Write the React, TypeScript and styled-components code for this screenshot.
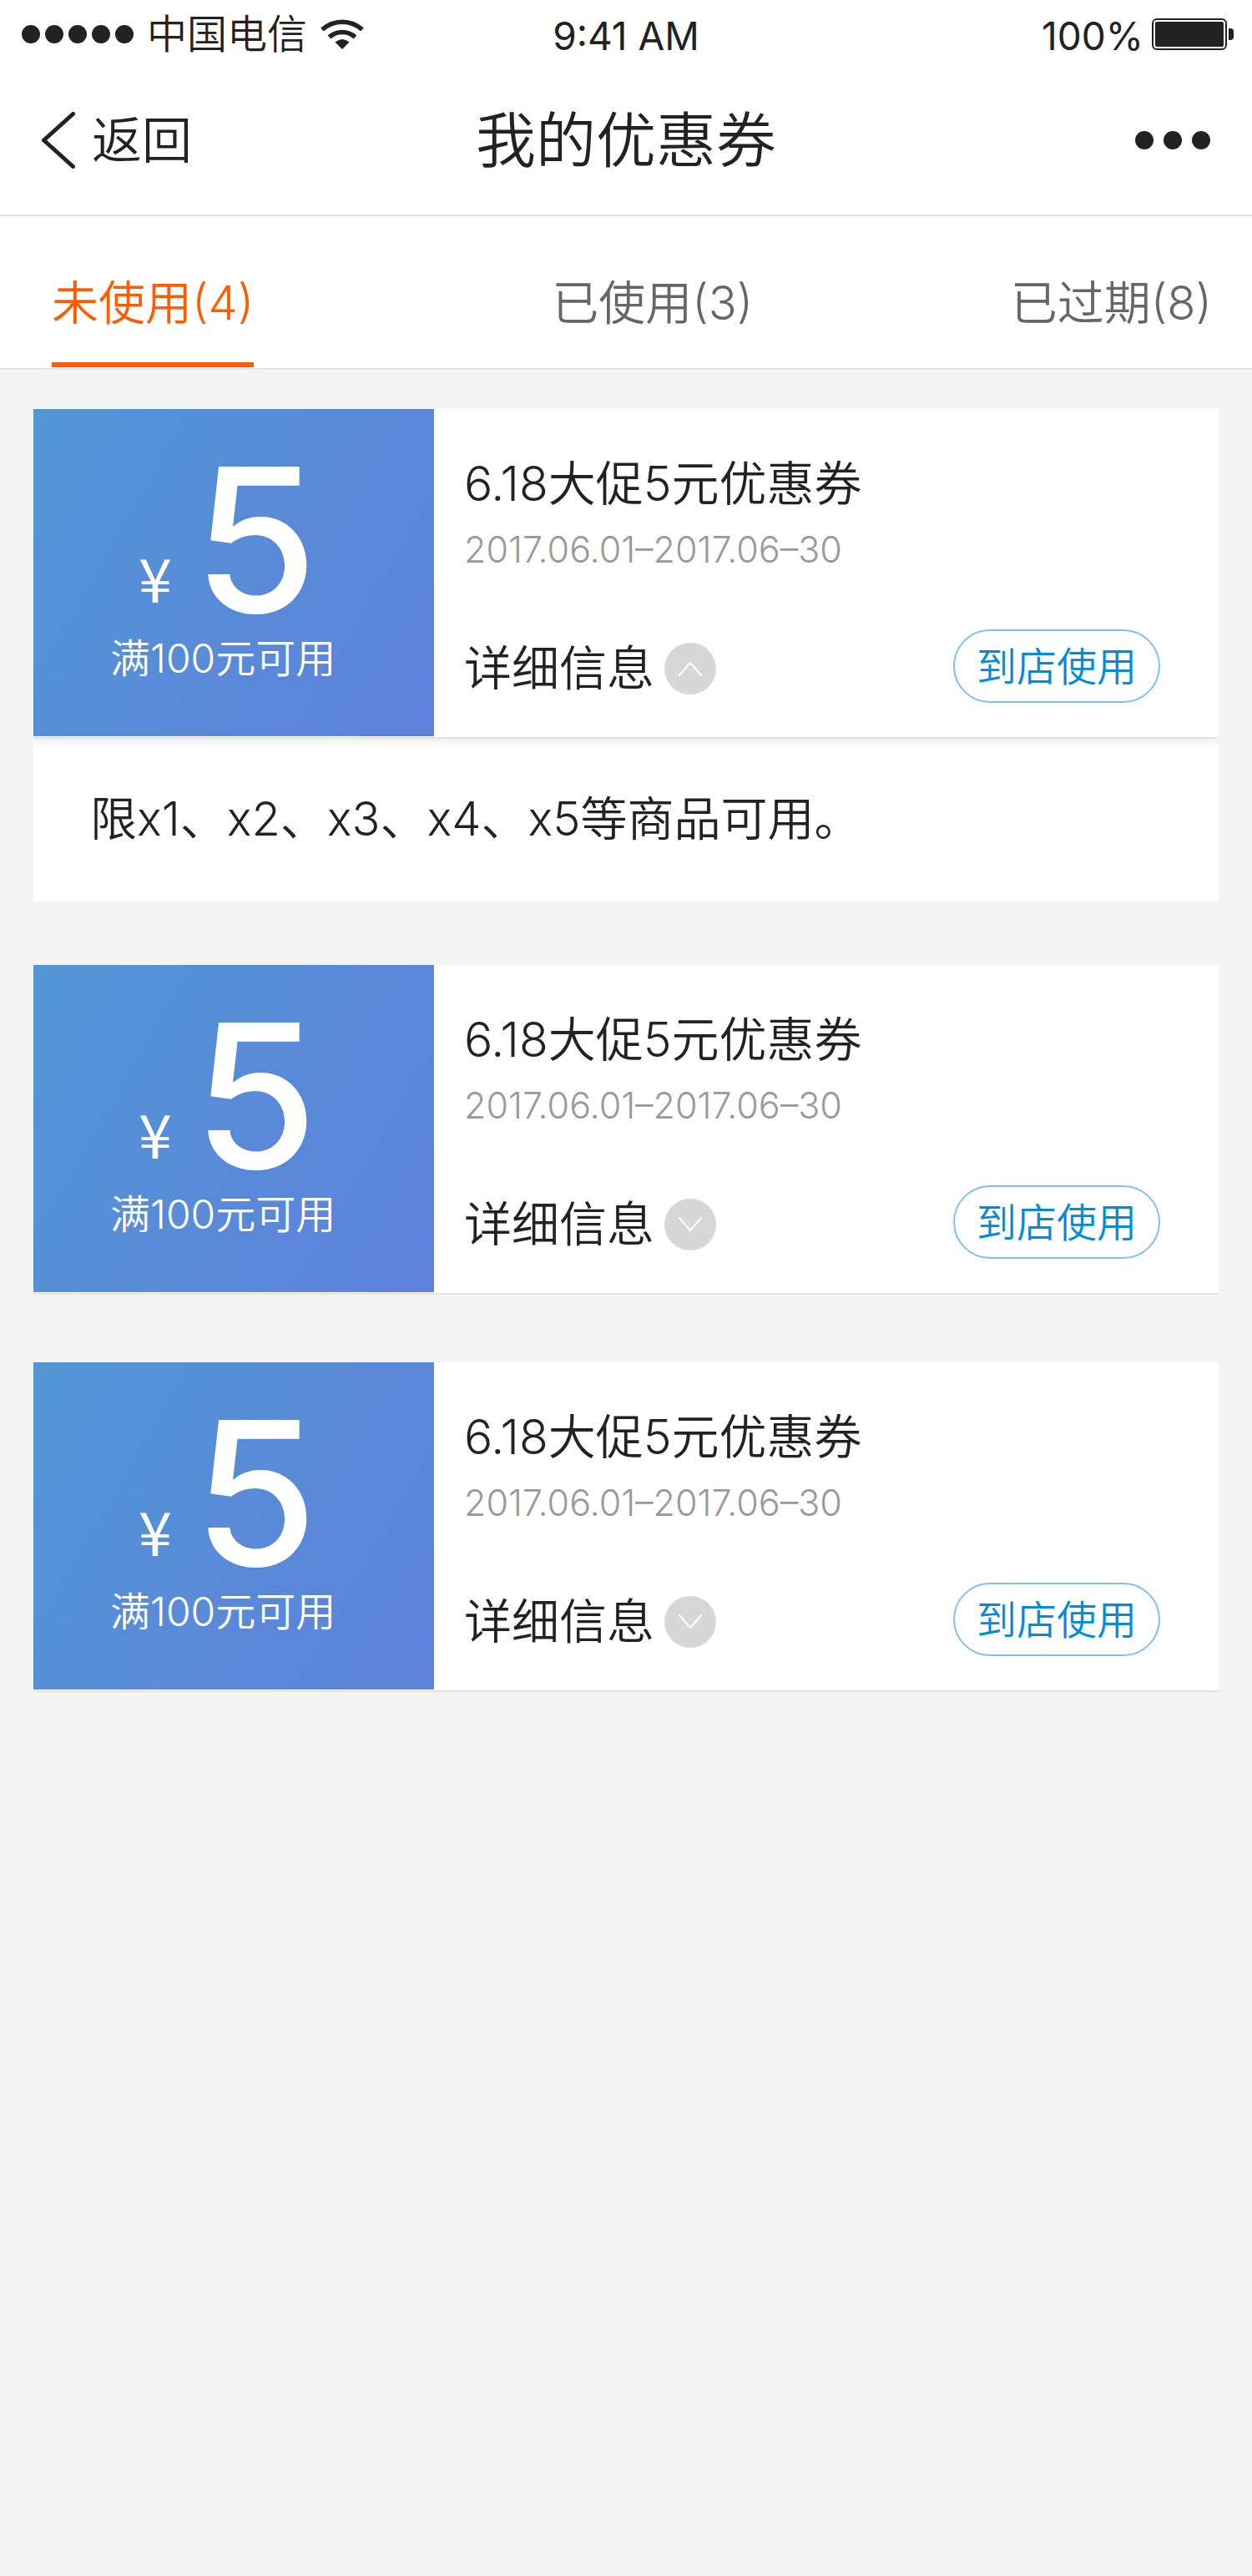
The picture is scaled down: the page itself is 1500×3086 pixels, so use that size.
import React, { useState } from "react";
import styled, { createGlobalStyle } from "styled-components";

const GlobalStyle = createGlobalStyle`
  *, *::before, *::after { box-sizing: border-box; }
  body {
    margin: 0;
    background: #f4f4f4;
    color: #222;
    font-family: Inter, "Noto Sans CJK SC", sans-serif;
    font-weight: 350;
  }
  button { font: inherit; color: inherit; background: none; border: 0; padding: 0; cursor: pointer; }
  h1, h2, p { margin: 0; font-weight: inherit; }
`;

const Page = styled.div`
  min-height: 100vh;
  background: #f4f4f4;
`;

const StatusBar = styled.div`
  display: grid;
  grid-template-columns: 1fr auto 1fr;
  align-items: center;
  height: 82px;
  padding: 0 22px;
  background: #fff;
  font-size: 48px;
  line-height: 64px;
`;

const StatusGroup = styled.div<{ $end?: boolean }>`
  display: flex;
  align-items: center;
  justify-content: ${(p) => (p.$end ? "flex-end" : "flex-start")};
  gap: ${(p) => (p.$end ? "10px" : "16px")};
  padding-left: 4px;
`;

const Latin = styled.span`
  padding-top: 4px;
  font-size: 46px;
  font-weight: 400;
`;

const Dots = styled.span<{ $gap: number }>`
  display: flex;
  gap: ${(p) => p.$gap}px;
`;

const Dot = styled.span`
  width: 22px;
  height: 22px;
  border-radius: 50%;
  background: #222;
`;

const NavBar = styled.header`
  display: grid;
  grid-template-columns: 1fr auto 1fr;
  align-items: center;
  height: 177px;
  padding: 0 50px 4px;
  background: #fff;
  border-bottom: 2px solid #e3e3e3;
`;

const BackButton = styled.button`
  display: flex;
  align-items: center;
  justify-self: start;
  gap: 18px;
  font-size: 60px;
  line-height: 80px;
`;

const PageTitle = styled.h1`
  font-size: 72px;
  line-height: 96px;
`;

const MoreButton = styled.button`
  justify-self: end;
  padding: 20px 0;
`;

const Tabs = styled.div`
  display: grid;
  grid-template-columns: 12fr 11fr auto;
  justify-items: start;
  height: 184px;
  padding: 0 48px 0 62px;
  background: #fff;
  border-bottom: 2px solid #e3e3e3;
  box-shadow: 0 1px #fff;
`;

const Tab = styled.button<{ $active: boolean }>`
  height: 181px;
  padding-top: 32px;
  border-bottom: 6px solid ${(p) => (p.$active ? "#ff5b00" : "transparent")};
  color: ${(p) => (p.$active ? "#ff5b00" : "#666")};
  font-size: 56px;
  line-height: 76px;
`;

const CouponList = styled.main`
  padding: 47px 40px 0;
`;

const CouponItem = styled.article<{ $open: boolean }>`
  margin-bottom: ${(p) => (p.$open ? 76 : 81)}px;
`;

const CouponCard = styled.div`
  display: grid;
  grid-template-columns: 480px 1fr;
  grid-template-rows: 392px;
  padding-bottom: 1px;
  background: #fff;
  border-bottom: 2px solid #e3e3e3;
`;

const Value = styled.div`
  display: flex;
  flex-direction: column;
  align-items: flex-start;
  gap: 12px;
  padding: 57px 0 0 92px;
  color: #fff;
  background: linear-gradient(120deg, #5196d5, #5f80db);
`;

const Amount = styled.div`
  display: flex;
  align-items: flex-end;
  gap: 26px;
  padding-left: 34px;
`;

const Currency = styled.span`
  font-family: "Noto Sans CJK SC", sans-serif;
  font-size: 72px;
  line-height: 72px;
  font-weight: 400;
  padding-bottom: 20px;
`;

const Figure = styled.span`
  font-size: 240px;
  line-height: 200px;
  font-weight: 500;
`;

const Condition = styled.p`
  font-size: 48px;
  line-height: 60px;
`;

const Info = styled.div`
  display: flex;
  flex-direction: column;
  padding: 52px 70px 0 36px;
`;

const CouponName = styled.h2`
  font-size: 57px;
  line-height: 76px;
`;

const Validity = styled.p`
  color: #999;
  font-size: 43px;
  line-height: 80px;
`;

const Actions = styled.div`
  display: flex;
  align-items: center;
  justify-content: space-between;
  padding-top: 56px;
`;

const DetailToggle = styled.button`
  display: flex;
  align-items: center;
  gap: 12px;
  padding-top: 6px;
  font-size: 57px;
  line-height: 76px;
`;

const Round = styled.span`
  display: grid;
  place-items: center;
  width: 62px;
  height: 62px;
  border-radius: 50%;
  background: #d7d7d7;
`;

const UseButton = styled.button`
  width: 248px;
  height: 88px;
  padding-top: 2px;
  border: 2px solid #7cc3eb;
  border-radius: 44px;
  color: #008cdb;
  font-size: 48px;
  line-height: 64px;
`;

const Detail = styled.p`
  padding: 58px 68px 61px;
  background: linear-gradient(#f0f0f0, #fff 12px);
  font-size: 56px;
  line-height: 76px;
`;

const WifiIcon = () => (
  <svg width="52" height="38" viewBox="0 0 52 38" fill="none" stroke="#222" strokeWidth="5.500" aria-hidden="true">
    <path d="M2 13.500C15.500 1 36.500 1 50 13.500" />
    <path d="M10.500 22.500C19.500 14.500 32.500 14.500 41.500 22.500" />
    <path d="M26 37L17.500 28.500Q26 21.500 34.500 28.500Z" fill="#222" stroke="none" />
  </svg>
);

const BatteryIcon = () => (
  <svg width="98" height="38" viewBox="0 0 98 38" aria-hidden="true">
    <rect x="1" y="1" width="88" height="36" rx="5" fill="none" stroke="#222" strokeWidth="2" />
    <rect x="4" y="4" width="82" height="30" rx="2" fill="#222" />
    <path d="M92 12h2a4 4 0 0 1 4 4v6a4 4 0 0 1-4 4h-2z" fill="#222" />
  </svg>
);

const BackIcon = () => (
  <svg width="42" height="68" viewBox="0 0 42 68" fill="none" stroke="#222" strokeWidth="5" strokeLinecap="round" strokeLinejoin="round" aria-hidden="true">
    <path d="M37.500 2.500L2.500 34L37.500 65.500" />
  </svg>
);

const ArrowIcon = ({ up }: { up: boolean }) => (
  <svg width="28" height="18" viewBox="0 0 28 18" fill="none" stroke="#fff" strokeWidth="2" strokeLinecap="round" strokeLinejoin="round" aria-hidden="true">
    <path d={up ? "M1 17L14 2L27 17" : "M1 1L14 16L27 1"} />
  </svg>
);

const tabs = ["未使用(4)", "已使用(3)", "已过期(8)"];

const coupons = [1, 2, 3].map((id) => ({
  id,
  amount: 5,
  condition: "满100元可用",
  name: "6.18大促5元优惠券",
  validity: "2017.06.01–2017.06–30",
  detail: "限x1、x2、x3、x4、x5等商品可用。",
}));

type CouponData = (typeof coupons)[number];

function Coupon({ coupon, open, onToggle }: { coupon: CouponData; open: boolean; onToggle: () => void }) {
  return (
    <CouponItem $open={open}>
      <CouponCard>
        <Value>
          <Amount>
            <Currency>¥</Currency>
            <Figure>{coupon.amount}</Figure>
          </Amount>
          <Condition>{coupon.condition}</Condition>
        </Value>
        <Info>
          <CouponName>{coupon.name}</CouponName>
          <Validity>{coupon.validity}</Validity>
          <Actions>
            <DetailToggle type="button" aria-expanded={open} onClick={onToggle}>
              详细信息
              <Round>
                <ArrowIcon up={open} />
              </Round>
            </DetailToggle>
            <UseButton type="button">到店使用</UseButton>
          </Actions>
        </Info>
      </CouponCard>
      {open && <Detail>{coupon.detail}</Detail>}
    </CouponItem>
  );
}

export default function App() {
  const [active, setActive] = useState(0);
  const [openId, setOpenId] = useState<number | null>(1);

  return (
    <Page>
      <GlobalStyle />
      <StatusBar>
        <StatusGroup>
          <Dots $gap={6}>
            {[0, 1, 2, 3, 4].map((i) => (
              <Dot key={i} />
            ))}
          </Dots>
          <span>中国电信</span>
          <WifiIcon />
        </StatusGroup>
        <Latin>9:41 AM</Latin>
        <StatusGroup $end>
          <Latin>100%</Latin>
          <BatteryIcon />
        </StatusGroup>
      </StatusBar>
      <NavBar>
        <BackButton type="button">
          <BackIcon />
          返回
        </BackButton>
        <PageTitle>我的优惠券</PageTitle>
        <MoreButton type="button" aria-label="更多">
          <Dots $gap={12}>
            <Dot />
            <Dot />
            <Dot />
          </Dots>
        </MoreButton>
      </NavBar>
      <Tabs role="tablist">
        {tabs.map((label, i) => (
          <Tab key={label} type="button" role="tab" aria-selected={active === i} $active={active === i} onClick={() => setActive(i)}>
            {label}
          </Tab>
        ))}
      </Tabs>
      <CouponList>
        {coupons.map((coupon) => (
          <Coupon
            key={coupon.id}
            coupon={coupon}
            open={openId === coupon.id}
            onToggle={() => setOpenId(openId === coupon.id ? null : coupon.id)}
          />
        ))}
      </CouponList>
    </Page>
  );
}
